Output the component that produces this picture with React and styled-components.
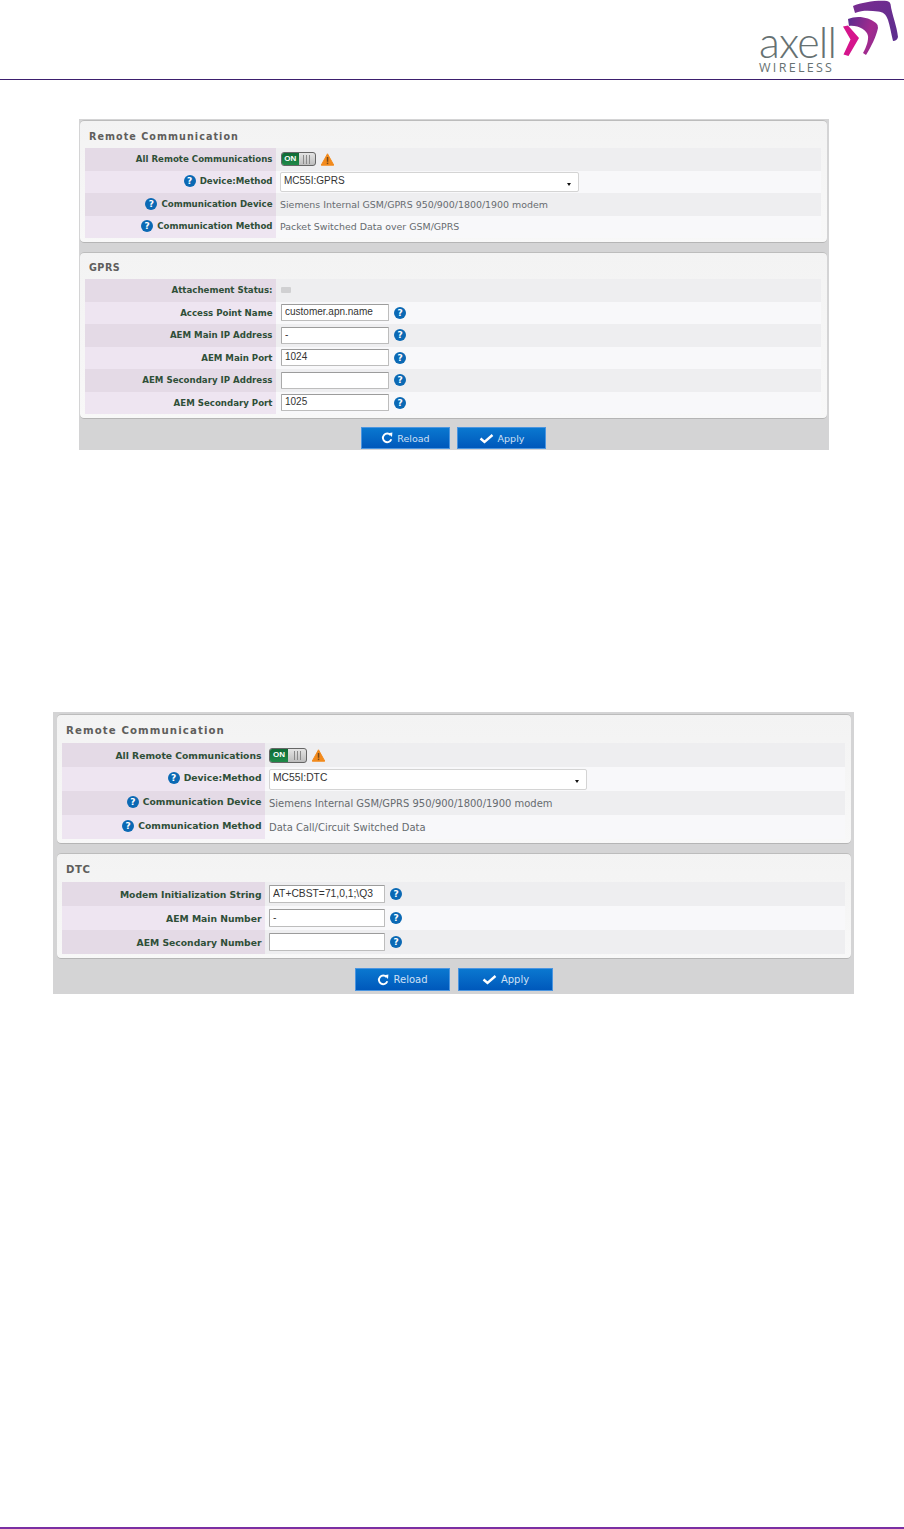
import React from "react";
import styled, { createGlobalStyle, ThemeProvider } from "styled-components";

const Global = createGlobalStyle`
  html, body { margin: 0; padding: 0; background: #fff; }
  * { box-sizing: border-box; }
`;

const small = {
  shotW: 750, shotLeft: 79, shotTop: 39, padT: 1, padL: 1, padR: 2, padB: 1, rowH: 22.5, labelW: 191,
  titleH1: 28, titleH2: 27, titlePadT: 4, panelGap: 8, btnTop: 8, btnW: 89, btnH: 22, btnGap: 7,
  labelFs: 8.65, labelLift: 1, valueFs: 9.43, titleFs: 9.6, inputFs: 10, inputW: 108, inputH: 17, selectW: 299, selectH: 20,
  valuePad: 4, ctrlOffset: 1, titleSp: 1.05, toggleW: 35, toggleH: 14, btnFs: 9.5,
};
const large = {
  shotW: 801, shotLeft: 53, shotTop: 262, padT: 2, padL: 4, padR: 3, padB: 3, rowH: 24, labelW: 203,
  titleH1: 29, titleH2: 29, titlePadT: 3, panelGap: 9, btnTop: 9, btnW: 95, btnH: 23, btnGap: 8,
  labelFs: 9.22, labelLift: 3, valueFs: 9.98, titleFs: 10.2, inputFs: 10.3, inputW: 116, inputH: 18, selectW: 318, selectH: 21,
  valuePad: 4, ctrlOffset: 0, titleSp: 1.1, toggleW: 38, toggleH: 15, btnFs: 10,
};

const Page = styled.div`
  width: 904px;
  height: 1529px;
  display: flex;
  flex-direction: column;
  background: #fff;
  overflow: hidden;
`;
const Header = styled.header`
  height: 80px;
  flex: none;
  border-bottom: 1px solid #3d1f6e;
  display: flex;
  justify-content: flex-end;
  align-items: flex-end;
  padding-right: 4px;
`;
const Logo = styled.div`
  display: flex;
  align-items: flex-start;
  height: 79px;
`;
const Wordmark = styled.div`
  display: flex;
  flex-direction: column;
  align-items: flex-start;
  margin-top: 23px;
  width: 81px;
`;
const Axell = styled.div`
  font-family: Lato, "Open Sans", sans-serif;
  font-weight: 300;
  font-size: 43px;
  line-height: 37px;
  letter-spacing: -0.9px;
  color: #667172;
`;
const Wireless = styled.div`
  font-family: "Open Sans", "Liberation Sans", sans-serif;
  font-size: 12.5px;
  line-height: 13px;
  letter-spacing: 2.3px;
  margin-top: 1px;
  color: #667172;
`;
const Mark = styled.svg`
  display: block;
  flex: none;
`;
const Shot = styled.section`
  flex: none;
  width: ${p => p.theme.shotW}px;
  margin-left: ${p => p.theme.shotLeft}px;
  margin-top: ${p => p.theme.shotTop}px;
  padding: ${p => p.theme.padT}px ${p => p.theme.padR}px ${p => p.theme.padB}px ${p => p.theme.padL}px;
  background: #d4d4d5;
`;
const Panel = styled.div`
  background: linear-gradient(#f3f3f3, #f8f8f8);
  border-radius: 4px;
  box-shadow: inset 0 1px 0 #bcbcbc, inset 0 -1px 0 #b5b5b5;
  padding: 0 6px 5px 5px;
  & + & { margin-top: ${p => p.theme.panelGap}px; }
`;
const PanelTitle = styled.h3`
  margin: 0;
  height: ${p => (p.$second ? p.theme.titleH2 : p.theme.titleH1)}px;
  padding: ${p => p.theme.titlePadT}px 0 0 4px;
  display: flex;
  align-items: center;
  font-family: "DejaVu Sans", sans-serif;
  font-weight: 700;
  font-size: ${p => p.theme.titleFs}px;
  letter-spacing: ${p => (p.$second ? 0.5 : p.theme.titleSp)}px;
  color: #5f5e5c;
`;
const Row = styled.div`
  display: grid;
  grid-template-columns: ${p => p.theme.labelW}px 1fr;
  height: ${p => p.theme.rowH}px;
`;
const Label = styled.div`
  background: ${p => (p.$odd ? "#e4dae6" : "#eee5f1")};
  display: flex;
  justify-content: flex-end;
  align-items: center;
  gap: 4px;
  padding-right: 3.5px;
  padding-bottom: ${p => (p.$lift ? p.theme.labelLift : 0)}px;
  font-family: "DejaVu Sans", sans-serif;
  font-weight: 700;
  font-size: ${p => p.theme.labelFs}px;
  color: #2f4f38;
  white-space: nowrap;
`;
const Value = styled.div`
  background: ${p => (p.$odd ? "#eeeef0" : "#f8f8fa")};
  display: flex;
  align-items: center;
  gap: 5px;
  padding-left: ${p => p.theme.valuePad}px;
  font-family: "DejaVu Sans", sans-serif;
  font-size: ${p => p.theme.valueFs}px;
  color: #666b6f;
  white-space: nowrap;
`;
const Help = styled.span`
  flex: none;
  width: 12px;
  height: 12px;
  border-radius: 50%;
  background: #0b69b4;
  color: #fff;
  font-family: "DejaVu Sans", sans-serif;
  font-weight: 700;
  font-size: 9px;
  line-height: 12px;
  text-align: center;
`;
const TextInput = styled.input`
  width: ${p => p.theme.inputW}px;
  height: ${p => p.theme.inputH}px;
  margin: 0 0 0 ${p => p.theme.ctrlOffset}px;
  padding: 0 3px 2px;
  border: 1px solid #bdbdbd;
  border-top-color: #9c9c9c;
  border-left-color: #aaa;
  border-radius: 1px;
  background: #fff;
  font-family: "Liberation Sans", sans-serif;
  font-size: ${p => p.theme.inputFs}px;
  color: #333;
  outline: none;
`;
const Select = styled.div`
  width: ${p => p.theme.selectW}px;
  height: ${p => p.theme.selectH}px;
  display: flex;
  justify-content: space-between;
  align-items: flex-start;
  padding: 2px 7px 0 3px;
  background: #fff;
  border: 1px solid #d4d4d4;
  border-radius: 2px;
  font-family: "Liberation Sans", sans-serif;
  font-size: ${p => p.theme.inputFs}px;
  color: #333;
`;
const Caret = styled.span`
  width: 0;
  height: 0;
  margin-top: 8px;
  border-left: 2.5px solid transparent;
  border-right: 2.5px solid transparent;
  border-top: 3px solid #111;
`;
const Toggle = styled.div`
  width: ${p => p.theme.toggleW}px;
  height: ${p => p.theme.toggleH}px;
  margin-left: ${p => p.theme.ctrlOffset}px;
  display: flex;
  border: 1px solid #666;
  border-radius: 3px;
  overflow: hidden;
  background: linear-gradient(#e4e4e4, #bdbdbd);
  flex: none;
`;
const ToggleOn = styled.span`
  width: 50%;
  background: linear-gradient(#0f6a35, #1f8a48);
  color: #fff;
  font-family: "Liberation Sans", sans-serif;
  font-weight: 700;
  font-size: 8px;
  line-height: 12px;
  text-align: center;
`;
const ToggleGrip = styled.span`
  flex: 1;
  display: flex;
  justify-content: center;
  align-items: center;
  gap: 2px;
`;
const GripLine = styled.i`
  width: 1px;
  height: 9px;
  background: #8a8a8a;
`;
const Led = styled.span`
  width: 10px;
  height: 6px;
  margin-left: ${p => p.theme.ctrlOffset}px;
  border-radius: 1px;
  background: #d0d0d2;
`;
const Buttons = styled.div`
  display: flex;
  justify-content: center;
  gap: ${p => p.theme.btnGap}px;
  margin-top: ${p => p.theme.btnTop}px;
`;
const Button = styled.button`
  width: ${p => p.theme.btnW}px;
  height: ${p => p.theme.btnH}px;
  display: flex;
  justify-content: center;
  align-items: center;
  gap: 4px;
  padding: 0;
  border: 1px solid #4b95e0;
  background: linear-gradient(#0a78d0, #0058bb);
  color: #cfe0f5;
  font-family: "DejaVu Sans", sans-serif;
  font-size: ${p => p.theme.btnFs}px;
`;
const Footer = styled.footer`
  margin-top: auto;
  height: 2px;
  flex: none;
  background: #7b2fa3;
`;

const ReloadIcon = () => (
  <svg width="12" height="12" viewBox="0 0 12 12" fill="none">
    <path d="M9.6 3.2A4.3 4.3 0 1 0 10.3 7.2" stroke="#fff" strokeWidth="1.9" />
    <path d="M7.2 1.2l4.2-.6-.4 4.4z" fill="#fff" />
  </svg>
);
const CheckIcon = () => (
  <svg width="15" height="11" viewBox="0 0 15 11" fill="none">
    <path d="M1.5 5.5l4 3.5 8-7" stroke="#fff" strokeWidth="2.4" />
  </svg>
);
const WarnIcon = () => (
  <svg width="13" height="13" viewBox="0 0 13 13">
    <path d="M6.5 .8L12.8 12.2H.2z" fill="#f28a1c" stroke="#f28a1c" strokeLinejoin="round" />
    <rect x="5.8" y="4" width="1.5" height="4.8" fill="#7a4a1a" />
    <rect x="5.8" y="9.6" width="1.5" height="1.5" fill="#7a4a1a" />
  </svg>
);
const LogoMark = () => (
  <Mark width="60" height="62" viewBox="0 0 60 62">
    <defs>
      <linearGradient id="midGrad" x1="0" y1="0.2" x2="1" y2="0.6">
        <stop offset="0" stopColor="#5f2d8e" />
        <stop offset="0.7" stopColor="#a42a8e" />
        <stop offset="1" stopColor="#8f2c90" />
      </linearGradient>
      <linearGradient id="outGrad" x1="0" y1="0" x2="1" y2="1">
        <stop offset="0" stopColor="#7a2c90" />
        <stop offset="1" stopColor="#5b2d8e" />
      </linearGradient>
    </defs>
    <path d="M3 26.5L8 25.5 19 38 8.5 56 3.5 54.5 10.5 39.5z" fill="#d5158c" />
    <path d="M8 19C17 15 29 17 36 23Q38.5 25 38 28C36 37 31 47 26 55L23 53C27 46 28.5 40 28 36 27 30 18 25 9 26z" fill="url(#midGrad)" />
    <path d="M13 6C22 2 38 0 47 1Q50 1.5 50.5 4C52 15 57 26 58 37Q57 41 53 41C51 33 50 26 48 20 46 14 43 12 38 11.5 30 10.5 22 10 15 13z" fill="url(#outGrad)" />
  </Mark>
);

const HelpIcon = () => <Help>?</Help>;

const FormRow = ({ odd, label, help, children }) => (
  <Row>
    <Label $odd={odd} $lift={help}>{help && <HelpIcon />}<span>{label}</span></Label>
    <Value $odd={odd}>{children}</Value>
  </Row>
);

const InputRow = ({ odd, label, value }) => (
  <FormRow odd={odd} label={label}>
    <TextInput readOnly value={value} />
    <HelpIcon />
  </FormRow>
);

const RemotePanel = ({ method, methodText }) => (
  <Panel>
    <PanelTitle>Remote Communication</PanelTitle>
    <FormRow odd label="All Remote Communications">
      <Toggle>
        <ToggleOn>ON</ToggleOn>
        <ToggleGrip><GripLine /><GripLine /><GripLine /></ToggleGrip>
      </Toggle>
      <WarnIcon />
    </FormRow>
    <FormRow label="Device:Method" help>
      <Select>{method}<Caret /></Select>
    </FormRow>
    <FormRow odd label="Communication Device" help>Siemens Internal GSM/GPRS 950/900/1800/1900 modem</FormRow>
    <FormRow label="Communication Method" help>{methodText}</FormRow>
  </Panel>
);

const Actions = () => (
  <Buttons>
    <Button><ReloadIcon />Reload</Button>
    <Button><CheckIcon />Apply</Button>
  </Buttons>
);

export default function App() {
  return (
    <Page>
      <Global />
      <Header>
        <Logo>
          <Wordmark>
            <Axell>axell</Axell>
            <Wireless>WIRELESS</Wireless>
          </Wordmark>
          <LogoMark />
        </Logo>
      </Header>

      <ThemeProvider theme={small}>
        <Shot>
          <RemotePanel method="MC55I:GPRS" methodText="Packet Switched Data over GSM/GPRS" />
          <Panel>
            <PanelTitle $second>GPRS</PanelTitle>
            <FormRow odd label="Attachement Status:"><Led /></FormRow>
            <InputRow label="Access Point Name" value="customer.apn.name" />
            <InputRow odd label="AEM Main IP Address" value="-" />
            <InputRow label="AEM Main Port" value="1024" />
            <InputRow odd label="AEM Secondary IP Address" value="" />
            <InputRow label="AEM Secondary Port" value="1025" />
          </Panel>
          <Actions />
        </Shot>
      </ThemeProvider>

      <ThemeProvider theme={large}>
        <Shot>
          <RemotePanel method="MC55I:DTC" methodText="Data Call/Circuit Switched Data" />
          <Panel>
            <PanelTitle $second>DTC</PanelTitle>
            <InputRow odd label="Modem Initialization String" value="AT+CBST=71,0,1;\Q3" />
            <InputRow label="AEM Main Number" value="-" />
            <InputRow odd label="AEM Secondary Number" value="" />
          </Panel>
          <Actions />
        </Shot>
      </ThemeProvider>

      <Footer />
    </Page>
  );
}
